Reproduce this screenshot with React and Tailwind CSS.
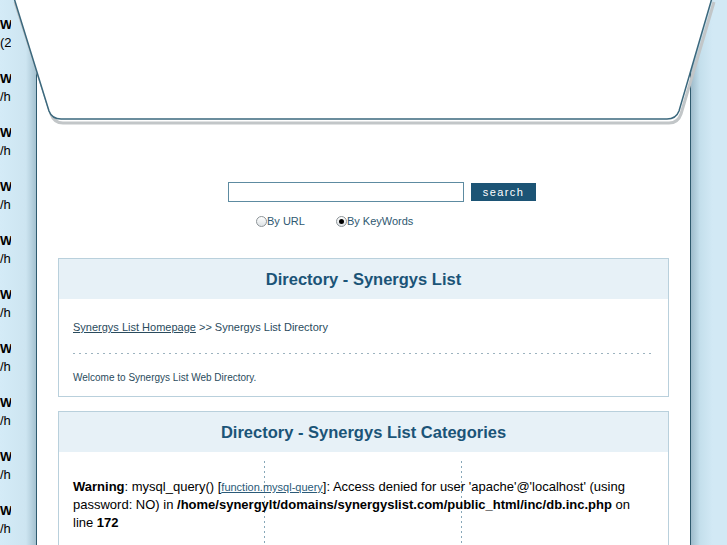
import React from 'react';

function Radio({ checked, label }) {
  return (
    <label className="flex items-center">
      <span className="w-[11px] h-[11px] rounded-full border border-[#8d9498] bg-[linear-gradient(#ffffff,#dde2e5)] flex items-center justify-center">
        {checked && <span className="w-[5px] h-[5px] rounded-full bg-black" />}
      </span>
      <span>{label}</span>
    </label>
  );
}

function Box({ title, children, className }) {
  return (
    <div className={`border border-[#b9d0dc] bg-white mx-[21px] ${className || ''}`}>
      <div className="h-[40px] bg-[#e7f1f7] flex items-center justify-center">
        <h2 className="text-[16.5px] font-bold text-[#1b5477]">{title}</h2>
      </div>
      {children}
    </div>
  );
}

const blocks = ['(2', '/h', '/h', '/h', '/h', '/h', '/h', '/h', '/h', '/h'];

export default function App() {
  return (
    <div className="relative w-[727px] h-[545px] overflow-hidden flex font-['Liberation_Sans',Arial,sans-serif] bg-[#d2e9f5]">
      {/* left strip with the cut warnings */}
      <div className="w-[36px] h-full bg-[linear-gradient(to_right,#d4ebf7_0%,#cde5f1_72%,#a5c2d0_100%)] pt-[16px]">
        <div className="w-[11px] overflow-hidden text-[13px] leading-[18px] text-black">
          {blocks.map((b, i) => (
            <div key={i} className="h-[54px] whitespace-nowrap">
              <div className="font-bold">Warning</div>
              <div>{b}ome</div>
            </div>
          ))}
        </div>
      </div>

      {/* main column */}
      <div className="w-[655px] h-full bg-white border-x border-[#2f5a6e] pt-[182px]">
        <div className="flex items-center ml-[191px] gap-[7px]">
          <div className="w-[236px] h-[20px] border border-[#5d8ba1] bg-white" />
          <button className="w-[65px] h-[18px] bg-[#1c5475] text-white text-[11px] tracking-[1.4px] leading-[18px]">
            search
          </button>
        </div>
        <div className="flex items-center ml-[219px] mt-[12px] h-[14px] text-[11px] text-[#2e5870] gap-[31px]">
          <Radio label="By URL" />
          <Radio checked label="By KeyWords" />
        </div>

        <Box title="Directory - Synergys List" className="mt-[30px]">
          <div className="pl-[14px] pr-[17px] pt-[22px] pb-[12px]">
            <p className="text-[11px] leading-[13px] text-[#2a4b5d]">
              <a className="underline">Synergys List Homepage</a> &gt;&gt; Synergys List Directory
            </p>
            <div className="mt-[19px] h-px bg-[repeating-linear-gradient(to_right,#9cb3bf_0_2px,transparent_2px_6px)]" />
            <p className="mt-[18px] text-[10px] leading-[12px] text-[#2a4b5d]">Welcome to Synergys List Web Directory.</p>
          </div>
        </Box>

        <Box title="Directory - Synergys List Categories" className="mt-[14px] h-[200px]">
          <div className="relative pl-[14px] pr-[20px] pt-[26px]">
            <div className="absolute top-[9px] bottom-0 left-[205px] w-px bg-[repeating-linear-gradient(to_bottom,#86a7b8_0_2px,transparent_2px_5px)]" />
            <div className="absolute top-[9px] bottom-0 left-[402px] w-px bg-[repeating-linear-gradient(to_bottom,#86a7b8_0_2px,transparent_2px_5px)]" />
            <p className="relative text-[13px] leading-[18px] text-black h-[200px]">
              <b>Warning</b>: mysql_query() [<a className="underline text-[11px] leading-[18px] text-[#2a5a78]">function.mysql-query</a>]: Access denied for user 'apache'@'localhost' (using password: NO) in <b>/home/synergylt/domains/synergyslist.com/public_html/inc/db.inc.php</b> on line <b>172</b>
            </p>
          </div>
        </Box>
      </div>

      {/* right strip */}
      <div className="w-[36px] h-full bg-[linear-gradient(to_right,#9fbccb_0%,#c4dfec_25%,#d2e9f5_60%)]" />

      {/* header tab drawing */}
      <svg className="absolute top-0 left-0" width="727" height="130" viewBox="0 0 727 130">
        <path d="M15,2 L51,114 Q54,123 63,123 L669,123 Q678,123 681,114 L714,2" fill="none" stroke="#c2c6c8" strokeWidth="3" />
        <path d="M14,-2 L49,111 Q52,119 61,119 L667,119 Q676,119 679,111 L712,-2 Z" fill="#ffffff" stroke="none" />
        <path d="M14,-2 L49,111 Q52,119 61,119 L667,119 Q676,119 679,111 L712,-2" fill="none" stroke="#3b687d" strokeWidth="1.5" />
      </svg>
    </div>
  );
}
